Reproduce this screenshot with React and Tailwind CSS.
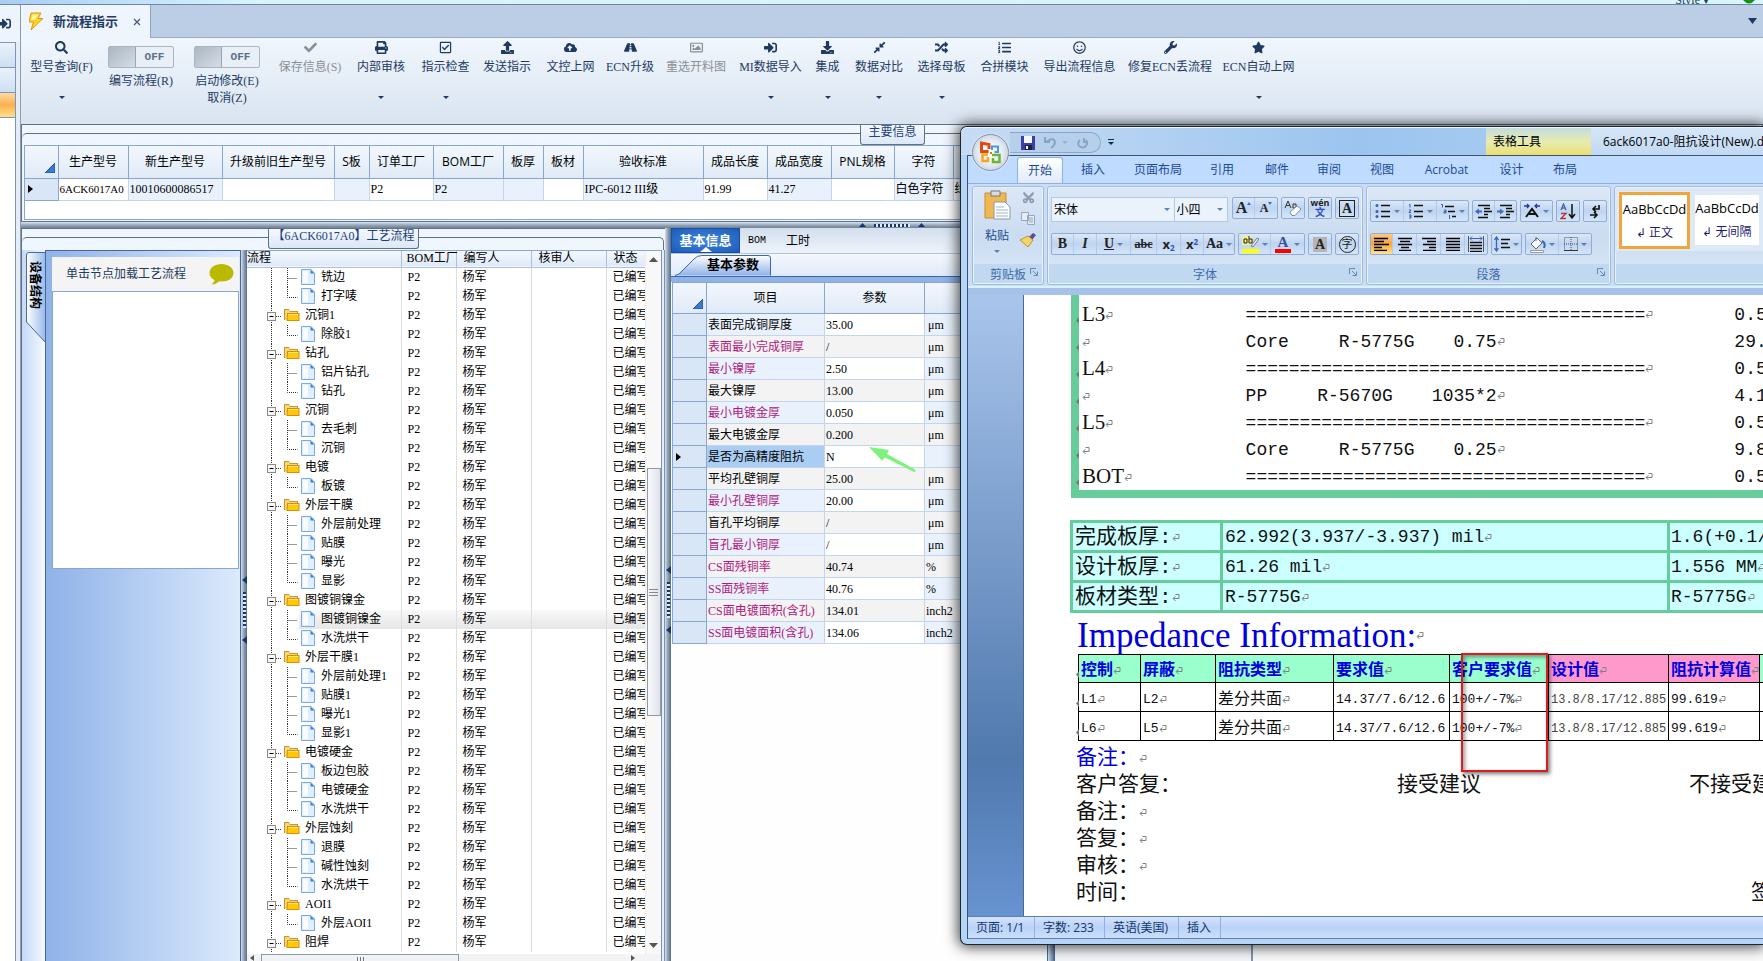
import React from 'react';
import { FaSearch, FaCheck, FaPrint, FaRegCheckSquare, FaUpload, FaCloudUploadAlt, FaRoad, FaRegImage, FaSignInAlt, FaDownload, FaCompressAlt, FaRandom, FaListOl, FaRegSmile, FaWrench, FaStar, FaCut } from 'react-icons/fa';

const toolItems = [
  { label: '保存信息(S)', icon: FaCheck, width: 'w-[72px]', disabled: true },
  { label: '内部审核', icon: FaPrint, width: 'w-[70px]', menu: true },
  { label: '指示检查', icon: FaRegCheckSquare, width: 'w-[59px]', menu: true },
  { label: '发送指示', icon: FaUpload, width: 'w-[64px]' },
  { label: '文控上网', icon: FaCloudUploadAlt, width: 'w-[63px]' },
  { label: 'ECN升级', icon: FaRoad, width: 'w-[56px]' },
  { label: '重选开料图', icon: FaRegImage, width: 'w-[76px]', disabled: true },
  { label: 'MI数据导入', icon: FaSignInAlt, width: 'w-[73px]', menu: true },
  { label: '集成', icon: FaDownload, width: 'w-[41px]', menu: true },
  { label: '数据对比', icon: FaCompressAlt, width: 'w-[62px]', menu: true },
  { label: '选择母板', icon: FaRandom, width: 'w-[63px]', menu: true },
  { label: '合拼模块', icon: FaListOl, width: 'w-[63px]' },
  { label: '导出流程信息', icon: FaRegSmile, width: 'w-[87px]' },
  { label: '修复ECN丢流程', icon: FaWrench, width: 'w-[94px]' },
  { label: 'ECN自动上网', icon: FaStar, width: 'w-[83px]', menu: true },
];

const mainColumns = [
  { name: '生产型号', width: 'w-[70px]', value: '6ACK6017A0', tint: false },
  { name: '新生产型号', width: 'w-[94px]', value: '10010600086517', tint: true },
  { name: '升级前旧生产型号', width: 'w-[112px]', value: '', tint: false },
  { name: 'S板', width: 'w-[35px]', value: '', tint: true },
  { name: '订单工厂', width: 'w-[64px]', value: 'P2', tint: false },
  { name: 'BOM工厂', width: 'w-[70px]', value: 'P2', tint: true },
  { name: '板厚', width: 'w-[40px]', value: '', tint: true },
  { name: '板材', width: 'w-[40px]', value: '', tint: false },
  { name: '验收标准', width: 'w-[120px]', value: 'IPC-6012 III级', tint: true },
  { name: '成品长度', width: 'w-[64px]', value: '91.99', tint: false },
  { name: '成品宽度', width: 'w-[64px]', value: '41.27', tint: true },
  { name: 'PNL规格', width: 'w-[63px]', value: '', tint: false },
  { name: '字符', width: 'w-[59px]', value: '白色字符', tint: true },
  { name: '', width: 'w-[80px]', value: '绿色', tint: false },
];

const processTree = [
  { name: '', steps: ['铣边', '打字唛'] },
  { name: '沉铜1', steps: ['除胶1'] },
  { name: '钻孔', steps: ['铝片钻孔', '钻孔'] },
  { name: '沉铜', steps: ['去毛刺', '沉铜'] },
  { name: '电镀', steps: ['板镀'] },
  { name: '外层干膜', steps: ['外层前处理', '贴膜', '曝光', '显影'] },
  { name: '图镀铜镍金', steps: ['图镀铜镍金', '水洗烘干'] },
  { name: '外层干膜1', steps: ['外层前处理1', '贴膜1', '曝光1', '显影1'] },
  { name: '电镀硬金', steps: ['板边包胶', '电镀硬金', '水洗烘干'] },
  { name: '外层蚀刻', steps: ['退膜', '碱性蚀刻', '水洗烘干'] },
  { name: 'AOI1', steps: ['外层AOI1'] },
  { name: '阻焊', steps: [] },
];

const treeRows = processTree.flatMap((group) => [
  ...(group.name ? [{ name: group.name, folder: true }] : []),
  ...group.steps.map((step, i) => ({
    name: step,
    last: i === group.steps.length - 1,
    selected: group.name === '图镀铜镍金' && i === 0,
  })),
]);

const params = [
  { name: '表面完成铜厚度', value: '35.00', unit: 'μm' },
  { name: '表面最小完成铜厚', value: '/', unit: 'μm', key: true },
  { name: '最小镍厚', value: '2.50', unit: 'μm', key: true },
  { name: '最大镍厚', value: '13.00', unit: 'μm' },
  { name: '最小电镀金厚', value: '0.050', unit: 'μm', key: true },
  { name: '最大电镀金厚', value: '0.200', unit: 'μm' },
  { name: '是否为高精度阻抗', value: 'N', unit: '', current: true },
  { name: '平均孔壁铜厚', value: '25.00', unit: 'μm' },
  { name: '最小孔壁铜厚', value: '20.00', unit: 'μm', key: true },
  { name: '盲孔平均铜厚', value: '/', unit: 'μm' },
  { name: '盲孔最小铜厚', value: '/', unit: 'μm', key: true },
  { name: 'CS面残铜率', value: '40.74', unit: '%', key: true },
  { name: 'SS面残铜率', value: '40.76', unit: '%', key: true },
  { name: 'CS面电镀面积(含孔)', value: '134.01', unit: 'inch2', key: true },
  { name: 'SS面电镀面积(含孔)', value: '134.06', unit: 'inch2', key: true },
];

const wordTabs = [
  { name: '插入', width: 'w-[60px]' },
  { name: '页面布局', width: 'w-[70px]' },
  { name: '引用', width: 'w-[58px]' },
  { name: '邮件', width: 'w-[52px]' },
  { name: '审阅', width: 'w-[52px]' },
  { name: '视图', width: 'w-[54px]' },
  { name: 'Acrobat', width: 'w-[75px]' },
  { name: '设计', width: 'w-[55px]' },
  { name: '布局', width: 'w-[52px]' },
];

const foil = '=====================================';

const stackRows = [
  { layer: 'L3', text: foil, value: '0.59' },
  { layer: '', text: 'Core', part: 'R-5775G', size: '0.75', value: '29.53' },
  { layer: 'L4', text: foil, value: '0.59' },
  { layer: '', text: 'PP', part: 'R-5670G', size: '1035*2', value: '4.17' },
  { layer: 'L5', text: foil, value: '0.59' },
  { layer: '', text: 'Core', part: 'R-5775G', size: '0.25', value: '9.84' },
  { layer: 'BOT', text: foil, value: '0.59' },
];

const boardRows = [
  ['完成板厚:', '62.992(3.937/-3.937) mil', '1.6(+0.1/-0.1) MM'],
  ['设计板厚:', '61.26 mil', '1.556 MM'],
  ['板材类型:', 'R-5775G', 'R-5775G'],
];

const impedanceRows = [
  ['L1', 'L2', '差分共面', '14.37/7.6/12.6', '100+/-7%', '13.8/8.17/12.885', '99.619'],
  ['L6', 'L5', '差分共面', '14.37/7.6/12.6', '100+/-7%', '13.8/8.17/12.885', '99.619'],
];

const Caret = ({ className = 'text-[#1f3a5f]' }) => (
  <svg width="6" height="3" viewBox="0 0 6 3" className={`shrink-0 ${className}`}><path d="M0 0h6L3 3z" fill="currentColor" /></svg>
);

const Mark = () => (
  <svg width="8" height="9" viewBox="0 0 8 9" className="inline-block shrink-0"><path d="M3.500 1.500h3.500v4H1.500M3.500 3.500l-2.500 2 2.500 2.500" fill="none" stroke="#808080" /></svg>
);

const CellMark = () => (
  <svg width="3" height="7" viewBox="0 0 3 7" className="absolute bottom-[4px] left-[-3px]"><path d="M3 0v7L0 3.500z" fill="#6b7f76" /></svg>
);

const FolderIcon = () => (
  <svg width="16" height="14" viewBox="0 0 16 14" className="shrink-0">
    <path d="M0 1h5l1 2h8v9H0z" fill="#c9962b" />
    <path d="M1 2h4l1 2h7v2H3v6H1z" fill="#f3d67c" />
    <path d="M3 5h12.500v8H2.500z" fill="#d98f00" />
    <path d="M4 6h10.500v6H3.500z" fill="#ffc80a" />
    <path d="M4 6h10v1H4z" fill="#ffe680" />
  </svg>
);

const PageIcon = () => (
  <svg width="14" height="16" viewBox="0 0 14 16" className="shrink-0">
    <path d="M1 .5h9l3.500 3.500v11.500H.5V.5z" fill="#e0efff" stroke="#7aaae6" />
    <path d="M2 2h5v12H2z" fill="#f8fcff" />
    <path d="M9.500 .5v4h4z" fill="#3d7fd9" />
  </svg>
);

const Splitter = ({ offset }) => (
  <div className="flex w-[6px] shrink-0 flex-col items-center gap-[8px] overflow-hidden bg-linear-to-r from-[#d6e0ea] via-[#8e9fb2] to-[#55708f]">
    <div className={offset} />
    <svg width="5" height="8" viewBox="0 0 5 8" className="shrink-0"><path d="M5 0v8L0 4z" fill="#17376b" /></svg>
    <div className="h-[36px] w-[3px] shrink-0 bg-[repeating-linear-gradient(#17376b_0_2px,#dfe8f3_2px_4px)]" />
    <svg width="5" height="8" viewBox="0 0 5 8" className="shrink-0"><path d="M5 0v8L0 4z" fill="#17376b" /></svg>
  </div>
);

const ToolButton = ({ item }) => {
  const Icon = item.icon;
  return (
    <button disabled={item.disabled} className={`flex h-full shrink-0 flex-col items-center whitespace-nowrap pt-[2px] ${item.width} ${item.disabled ? 'text-[#8b8f94]' : 'text-[#1f3a5f]'}`}>
      <Icon size={13} />
      <span className="mt-[5px] leading-[16px]">{item.label}</span>
      {item.menu && <Caret className="mt-[21px]" />}
    </button>
  );
};

const ToggleItem = ({ label, extra, width }) => (
  <label className={`flex h-full shrink-0 flex-col items-center whitespace-nowrap pt-[7px] text-[#1f3a5f] ${width}`}>
    <input type="checkbox" className="sr-only" />
    <span className="flex h-[22px] w-[66px] rounded-[2px] border border-[#a9b5c2] bg-[#e9eff6]">
      <span className="w-[27px] border-r border-[#98a5b3] bg-linear-to-br from-[#aab6c3] to-[#d6dde6]" />
      <span className="flex-1 text-center font-['Liberation_Mono'] text-[11px] font-bold leading-[20px] text-[#5d6f86]">OFF</span>
    </span>
    <span className="mt-[5px] leading-[16px]">{label}</span>
    {extra && <span className="leading-[18px]">{extra}</span>}
  </label>
);

const GridCorner = () => (
  <svg width="10" height="10" viewBox="0 0 10 10" className="ml-auto mr-[3px]"><path d="M10 0v10H0z" fill="#3b78d8" stroke="#1f4f9e" /></svg>
);

const RowPointer = () => (
  <svg width="5" height="8" viewBox="0 0 5 8" className="ml-[3px]"><path d="M0 0v8l5-4z" fill="#000" /></svg>
);

const MainInfo = () => (
  <section className="h-[98px] shrink-0 border border-[#5f7186] bg-[#f0f6fd]">
    <div className="relative mt-[8px] h-[88px] rounded-t-[5px] border-t border-[#5f7186] px-[2px] pt-[11px]">
      <h2 className="absolute left-[838px] top-[-9px] h-[20px] w-[65px] rounded-b-[3px] border border-t-0 border-[#5f7186] bg-linear-to-b from-[#f3f8fd] to-[#dce8f6] text-center leading-[14px] text-[#1f3f7a]">主要信息</h2>
      <div className="h-[75px] overflow-hidden border border-[#8ba6cc] bg-white">
        <table className="w-[1008px] table-fixed border-collapse">
          <thead>
            <tr className="h-[32px] bg-linear-to-b from-[#f2f7fd] to-[#e0eaf6]">
              <th className="w-[33px] border-b border-r border-[#8ba6cc] pt-[12px]"><GridCorner /></th>
              {mainColumns.map((c, i) => (
                <th key={i} className={`whitespace-nowrap border-b border-r border-[#8ba6cc] font-['Open_Sans','Noto_Sans_CJK_SC',sans-serif] font-normal leading-[16px] ${c.width}`}>{c.name}</th>
              ))}
            </tr>
          </thead>
          <tbody>
            <tr className="h-[22px]">
              <td className="border-b border-r border-[#8ba6cc] bg-[#d9e6f5]"><RowPointer /></td>
              {mainColumns.map((c, i) => (
                <td key={i} className={`overflow-hidden whitespace-nowrap border-b border-r border-[#c3d5ec] pl-px leading-[16px] ${c.tint ? 'bg-[#e9f2fc]' : 'bg-white'} ${i === 0 ? 'text-[11px]' : ''}`}>{c.value}</td>
              ))}
            </tr>
          </tbody>
        </table>
      </div>
    </div>
  </section>
);

const TreeCell = ({ row }) => (
  <div className="flex h-[19px] items-center">
    {row.folder ? (
      <>
        <svg width="37" height="19" viewBox="0 0 37 19" className="shrink-0">
          <path d="M24.500 0v19M29 10.500h5" fill="none" stroke="#333" strokeDasharray="1 1" />
          <rect x="20.500" y="6.500" width="8" height="8" fill="#f7f7f7" stroke="#8a8a8a" />
          <path d="M22.500 10.500h4" stroke="#000" />
        </svg>
        <FolderIcon />
        <span className="ml-[5px] leading-[16px]">{row.name}</span>
      </>
    ) : (
      <>
        <svg width="52" height="19" viewBox="0 0 52 19" className="shrink-0">
          <path d={row.last ? 'M24.500 0v19M40.500 0v10.500h10' : 'M24.500 0v19M40.500 0v19M40.500 10.500h10'} fill="none" stroke="#333" strokeDasharray="1 1" />
        </svg>
        <div className={`flex h-[19px] flex-1 items-center pl-[2px] ${row.selected ? 'bg-linear-to-b from-[#f8f8f8] to-[#e6e6e6]' : ''}`}>
          <PageIcon />
          <span className="ml-[6px] leading-[16px]">{row.name}</span>
        </div>
      </>
    )}
  </div>
);

const ProcessTree = () => (
  <div className="flex min-w-0 flex-1 flex-col border-t border-[#8ba6cc] bg-white">
    <div className="flex min-h-0 flex-1">
      <div className="min-w-0 flex-1 overflow-hidden">
        <table className="w-full table-fixed border-collapse">
          <thead>
            <tr className="h-[16px] border-b border-[#a9c0df] bg-linear-to-b from-[#f3f8fe] to-[#dfeaf8] text-left leading-[15px]">
              <th className="w-[154px] border-r border-[#a9c0df] font-normal">流程</th>
              <th className="w-[55px] whitespace-nowrap border-r border-[#a9c0df] pl-[5px] font-normal">BOM工厂</th>
              <th className="w-[75px] border-r border-[#a9c0df] pl-[7px] font-normal">编写人</th>
              <th className="w-[75px] border-r border-[#a9c0df] pl-[7px] font-normal">核审人</th>
              <th className="whitespace-nowrap pl-[7px] font-normal">状态</th>
            </tr>
          </thead>
          <tbody>
            {treeRows.map((row, i) => (
              <tr key={i} className="h-[19px] leading-[16px]">
                <td className="overflow-hidden whitespace-nowrap border-r border-[#dedede]"><TreeCell row={row} /></td>
                <td className={`border-r border-[#dedede] pl-[6px] ${row.selected ? 'bg-linear-to-b from-[#f8f8f8] to-[#e6e6e6]' : ''}`}>P2</td>
                <td className={`border-r border-[#dedede] pl-[6px] ${row.selected ? 'bg-linear-to-b from-[#f8f8f8] to-[#e6e6e6]' : ''}`}>杨军</td>
                <td className={`border-r border-[#dedede] ${row.selected ? 'bg-linear-to-b from-[#f8f8f8] to-[#e6e6e6]' : ''}`} />
                <td className={`overflow-hidden whitespace-nowrap pl-[6px] ${row.selected ? 'bg-linear-to-b from-[#f8f8f8] to-[#e6e6e6]' : ''}`}>已编写</td>
              </tr>
            ))}
          </tbody>
        </table>
      </div>
      <div className="flex w-[16px] shrink-0 flex-col items-center border-l border-[#ececec] bg-[#f8f8f8] py-[6px]">
        <svg width="9" height="5" viewBox="0 0 9 5" className="shrink-0"><path d="M0 5h9L4.500 0z" fill="#555" /></svg>
        <div className="mt-[206px] flex h-[248px] w-[14px] flex-col items-center justify-center gap-[2px] border border-[#8f98a5] bg-linear-to-r from-[#f8f9fb] to-[#dfe3ea]">
          <span className="h-px w-[9px] bg-[#888]" />
          <span className="h-px w-[9px] bg-[#888]" />
          <span className="h-px w-[9px] bg-[#888]" />
        </div>
        <svg width="9" height="5" viewBox="0 0 9 5" className="mt-auto shrink-0"><path d="M0 0h9L4.500 5z" fill="#555" /></svg>
      </div>
    </div>
    <div className="flex h-[7px] shrink-0 items-start bg-[#f3f3f3] pl-[3px]">
      <svg width="4" height="7" viewBox="0 0 4 7"><path d="M4 1v6L0 4z" fill="#555" /></svg>
      <div className="ml-[7px] flex h-[7px] w-[198px] justify-center gap-[2px] border border-b-0 border-[#8f98a5] bg-[#f0f2f5] pt-[2px]">
        <span className="w-px bg-[#777]" /><span className="w-px bg-[#777]" /><span className="w-px bg-[#777]" />
      </div>
      <svg width="4" height="7" viewBox="0 0 4 7" className="ml-auto mr-[26px]"><path d="M0 1v6l4-3z" fill="#555" /></svg>
    </div>
  </div>
);

const ProcessPanel = () => (
  <section className="relative flex w-[644px] shrink-0 flex-col border-l border-t border-[#5f7186] bg-[#f0f6fd] pt-[8px]">
    <div className="h-[13px] w-[642px] shrink-0 rounded-t-[5px] border-r border-t border-[#5f7186]" />
    <h2 className="absolute left-[246px] top-0 h-[20px] w-[151px] whitespace-nowrap rounded-b-[3px] border border-t-0 border-[#5f7186] bg-linear-to-b from-[#f3f8fd] to-[#dce8f6] text-center leading-[14px] text-[#1f3f7a]">【6ACK6017A0】工艺流程</h2>
    <div className="flex min-h-0 flex-1">
      <div className="w-[23px] shrink-0 bg-linear-to-r from-[#c4d8f6] to-[#f6faff] pt-[2px]">
        <div className="relative ml-[4px] h-[91px] w-[19px]">
          <svg width="19" height="91" viewBox="0 0 19 91" className="absolute left-0 top-0">
            <defs><linearGradient id="sideTab"><stop offset="0" stopColor="#fff" /><stop offset="1" stopColor="#9abbea" /></linearGradient></defs>
            <path d="M19 .5H3Q.5 .5 .5 3V70L19 90" fill="url(#sideTab)" stroke="#46699c" />
          </svg>
          <button className="relative pl-px pt-[9px] font-bold leading-[16px] [text-orientation:sideways] [writing-mode:vertical-rl]">设备结构</button>
        </div>
      </div>
      <div className="w-[196px] shrink-0 border border-b-0 border-[#46699c] bg-linear-to-r from-[#8fb2e8] to-[#dceafc] pl-[6px] pr-px pt-[6px]">
        <div className="flex h-[34px] items-center bg-[#f4f4f4] pl-[14px] leading-[16px] text-[#1f3a5f]">
          单击节点加载工艺流程
          <svg width="25" height="21" viewBox="0 0 25 21" className="ml-auto mr-[5px]"><path d="M12.500 0C19 0 24.500 3.800 24.500 9s-5.500 8.500-12 8.500q-1 0-2-.200Q7 20.500 2.500 20.500q3-2 3-4.500Q.5 13.500 .5 9C.5 3.800 6 0 12.500 0z" fill="#b9b900" /></svg>
        </div>
        <div className="h-[278px] border border-[#8ba6cc] bg-white" />
      </div>
      <Splitter offset="h-[318px] shrink-0" />
      <ProcessTree />
      <div className="w-[4px] shrink-0 border-x border-[#7d92ab] bg-[#e6eef7]" />
    </div>
  </section>
);

const ParamPanel = () => (
  <section className="flex w-[376px] shrink-0 flex-col bg-[#fefefe]">
    <nav className="flex h-[26px] shrink-0 items-center border-b border-[#b5c3d5] bg-linear-to-b from-[#d3dfee] to-[#edf3fa]">
      <button className="relative h-[25px] w-[69px] border border-[#1a4fa0] bg-radial from-[#3f87e0] to-[#1c5cb8] text-[13px] font-bold leading-[18px] text-white">
        基本信息
        <svg width="12" height="5" viewBox="0 0 12 5" className="absolute bottom-0 left-[28px]"><path d="M6 0l6 5H0z" fill="#fff" /></svg>
      </button>
      <button className="ml-[8px] font-['Liberation_Mono'] text-[10px] leading-[16px]">BOM</button>
      <button className="ml-[20px]">工时</button>
    </nav>
    <div className="flex h-[28px] shrink-0 items-end border-b-[5px] border-[#8fb2e8] bg-linear-to-b from-[#f5f8fd] to-[#dde9fa]">
      <div className="flex flex-1 border-b border-[#3b68a8]">
        <div className="relative ml-[4px] h-[21px] w-[97px]">
          <svg width="97" height="21" viewBox="0 0 97 21" className="absolute left-0 top-0">
            <defs><linearGradient id="topTab" x2="0" y2="1"><stop offset="0" stopColor="#fff" /><stop offset="1" stopColor="#8fb2e8" /></linearGradient></defs>
            <path d="M0 20.500Q4 20 7 16L19 4Q22 .5 27 .5H93Q95.500 .5 95.500 3V20.500" fill="url(#topTab)" stroke="#3b68a8" />
          </svg>
          <button className="relative ml-[32px] text-[13px] font-bold leading-[20px]">基本参数</button>
        </div>
      </div>
    </div>
    <table className="ml-px w-[375px] table-fixed border-collapse border-l border-t border-[#8ba6cc]">
      <thead>
        <tr className="h-[31px] bg-linear-to-b from-[#f2f7fd] to-[#dfe9f6] font-['Open_Sans','Noto_Sans_CJK_SC',sans-serif]">
          <th className="w-[34px] border-b border-r border-[#8ba6cc] pt-[12px]"><GridCorner /></th>
          <th className="w-[118px] border-b border-r border-[#8ba6cc] font-normal">项目</th>
          <th className="w-[100px] border-b border-r border-[#8ba6cc] font-normal">参数</th>
          <th className="border-b border-[#8ba6cc]" />
        </tr>
      </thead>
      <tbody>
        {params.map((p, i) => (
          <tr key={p.name} className={`h-[22px] leading-[16px] ${i % 2 ? 'bg-[#f3f3f3]' : 'bg-[#e9f2fc]'}`}>
            <td className="border-b border-r border-[#8ba6cc] bg-[#d9e6f5]">{p.current && <RowPointer />}</td>
            <td className={`whitespace-nowrap border-b border-r border-[#c3d5ec] pl-px ${p.key ? 'text-[#b0187c]' : ''} ${p.current ? 'bg-[#aacdf3]' : ''}`}>{p.name}</td>
            <td className={`relative border-b border-r border-[#c3d5ec] pl-px ${i % 2 ? '' : 'bg-white'}`}>
              {p.value}
              {p.current && (
                <svg width="48" height="28" viewBox="0 0 48 28" className="absolute left-[44px] top-0"><path d="M0 1l20 3-2 4 28 15.500q1.500 2-1 2.500L16 11.500l-3 3z" fill="#7df27d" /></svg>
              )}
            </td>
            <td className={`border-b border-[#c3d5ec] ${p.unit === 'μm' ? 'pl-[3px]' : 'pl-px'}`}>{p.unit}</td>
          </tr>
        ))}
      </tbody>
    </table>
  </section>
);

const RibbonGroup = ({ title, width, launcher, children }) => (
  <section className={`flex h-[99px] shrink-0 flex-col rounded-[3px] border border-[#9fbbdf] bg-linear-to-b from-[#dbe7f6] via-[#cbdcf1] to-[#dae8f8] shadow-[inset_0_0_0_1px_#e9f2fc] ${width}`}>
    <div className="flex-1">{children}</div>
    <div className="relative mx-px mb-px h-[19px] bg-[#c1d8f1] text-center leading-[21px] text-[#3e6aaa]">
      {title}
      {launcher && (
        <svg width="8" height="8" viewBox="0 0 8 8" className="absolute right-[4px] top-[4px]"><path d="M.5 6V.5H6M3 3l4 4M7.500 3.500v4h-4" fill="none" stroke="#6687b3" /></svg>
      )}
    </div>
  </section>
);

const Bar = ({ children }) => (
  <div className="flex h-[22px] shrink-0 divide-x divide-[#b3c9e6] rounded-[2px] border border-[#8fadd6] bg-linear-to-b from-[#dbe8f8] via-[#bed4f0] to-[#d5e5f8]">{children}</div>
);

const RB = ({ width, label, caret, className = '', children }) => (
  <button aria-label={label} className={`flex shrink-0 items-center justify-center gap-[3px] ${width} ${className}`}>
    {children}
    {caret && <Caret className="text-[#5a82b8]" />}
  </button>
);

const Lines = ({ rows }) => (
  <svg width="16" height="14" viewBox="0 0 16 14"><path d={rows} stroke="#000" strokeWidth="1.500" fill="none" /></svg>
);

const ListIcon = ({ kind }) => (
  <svg width="16" height="16" viewBox="0 0 16 16">
    <path d={kind === 'multi' ? 'M5 3.500h9M8 8.500h7M12 13.500h4' : 'M6 2.500h9M6 8.500h9M6 13.500h9'} stroke="#111" strokeWidth="1.300" />
    {kind === 'bullet' && <g fill="#3b5fb0"><circle cx="2" cy="2.500" r="1.500" /><circle cx="2" cy="8.500" r="1.500" /><circle cx="2" cy="13.500" r="1.500" /></g>}
    {kind === 'number' && <path d="M1 1.500h1v3M1 7h2L1 9.500h2M1 12h2v1.500H1.500M3 13.500V15H1" fill="none" stroke="#3b5fb0" />}
    {kind === 'multi' && <path d="M1 1.500h1.500v3M4 7h2v3H4V8.500h2M9.500 12v4" fill="none" stroke="#3b5fb0" />}
  </svg>
);

const Indent = ({ out }) => (
  <svg width="17" height="15" viewBox="0 0 17 15">
    <path d="M3 1.500h12M9 4.500h6M9 7.500h8M9 10.500h4M3 13.500h10" stroke="#111" strokeWidth="1.700" />
    <path d={out ? 'M0 7.500l4-3v2h3v2H4v2z' : 'M7 7.500l-4-3v2H0v2h3v2z'} fill="#3d6cc4" />
  </svg>
);

const OfficeButton = () => (
  <button aria-label="Office" className="absolute left-[11px] top-[7px] flex h-[37px] w-[37px] items-center justify-center rounded-full border border-[#8193ad] bg-radial from-white via-[#e6ebf2] to-[#aebccf] shadow-[0_0_2px_#fff]">
    <svg width="23" height="23" viewBox="0 0 23 23" fill="none">
      <path d="M10 8V3.500L2.500 2v8.500h7" stroke="#dd4a12" strokeWidth="3" />
      <path d="M13 9V5.500h6V11h-3.500" stroke="#4c9bd8" strokeWidth="2" />
      <path d="M9 13.500H3.500V20H9v-4" stroke="#f2a81d" strokeWidth="2.500" />
      <path d="M13 14h7.500v7H14v-4" stroke="#6fb338" strokeWidth="2.500" />
      <path d="M11 11h2v2h-2z" fill="#e0701d" />
    </svg>
  </button>
);

const FontGroup = () => (
  <div className="flex flex-col px-[3px] pt-[10px]">
    <div className="flex">
      <div className="relative h-[25px] w-[125px] border border-[#b1c8e6] bg-[#eaf2fb]">
        <select aria-label="字体" className="h-full w-full appearance-none pl-[2px] text-[12px] outline-none"><option>宋体</option></select>
        <Caret className="pointer-events-none absolute right-[4px] top-[10px] text-[#5a82b8]" />
      </div>
      <div className="relative h-[25px] w-[54px] border border-l-0 border-[#b1c8e6] bg-[#eaf2fb]">
        <select aria-label="字号" className="h-full w-full appearance-none pl-[2px] text-[12px] outline-none"><option>小四</option></select>
        <Caret className="pointer-events-none absolute right-[4px] top-[10px] text-[#5a82b8]" />
      </div>
      <div className="ml-[4px] flex gap-[3px] font-['Liberation_Serif','Noto_Sans_CJK_SC',serif] font-bold text-[#222]">
        <Bar>
          <RB width="w-[22px]" label="增大字体"><span className="text-[16px]">A</span><svg width="4" height="3" className="mb-[10px] -ml-[3px]"><path d="M0 3h4L2 0z" fill="#3d6cc4" /></svg></RB>
          <RB width="w-[22px]" label="缩小字体"><span className="text-[12px]">A</span><svg width="4" height="3" className="mb-[10px] -ml-[3px]"><path d="M0 0h4L2 3z" fill="#3d6cc4" /></svg></RB>
        </Bar>
        <Bar>
          <RB width="w-[22px]" label="清除格式">
            <svg width="18" height="17" viewBox="0 0 18 17"><path d="M1 8l3-7 3 7M2 5.500h4M9 8V4h3v4H9" fill="none" stroke="#333" /><path d="M6 12l7-6 4 3-6 6.500H8z" fill="#fff" stroke="#7d8ea6" /></svg>
          </RB>
        </Bar>
        <Bar>
          <button className="flex w-[22px] flex-col items-center">
            <span className="font-['Open_Sans'] text-[9px] leading-[9px]">wén</span>
            <span className="text-[10px] leading-[11px] text-[#2e4fc0]">文</span>
          </button>
        </Bar>
        <Bar><RB width="w-[22px]" label="字符边框"><span className="border border-[#222] px-[2px] text-[14px] leading-[15px]">A</span></RB></Bar>
      </div>
    </div>
    <div className="mt-[11px] flex gap-[3px] font-['Liberation_Serif','Noto_Sans_CJK_SC',serif] text-[#222]">
      <Bar>
        <RB width="w-[22px]" className="text-[14px] font-bold">B</RB>
        <RB width="w-[23px]" className="text-[14px] font-bold italic">I</RB>
        <RB width="w-[34px]" className="text-[14px] font-bold underline" caret>U</RB>
        <RB width="w-[26px]" className="text-[12px] font-bold line-through">abc</RB>
        <RB width="w-[24px]"><span className="font-['Open_Sans'] text-[13px] font-bold">x<sub className="text-[8px] text-[#2e4fc0]">2</sub></span></RB>
        <RB width="w-[23px]"><span className="font-['Open_Sans'] text-[13px] font-bold">x<sup className="text-[8px] text-[#2e4fc0]">2</sup></span></RB>
        <RB width="w-[30px]" className="text-[14px] font-bold" caret>Aa</RB>
      </Bar>
      <Bar>
        <RB width="w-[32px]" label="突出显示" caret>
          <svg width="17" height="18" viewBox="0 0 17 18"><path d="M0 14h17v4H0z" fill="#ffff00" /><path d="M0 1h10v9H0z" fill="#f6f08a" /><path d="M2 8V4h3v4H2M7 1v7h3V4H7" fill="none" stroke="#222" /><path d="M9 11l6-8 2 1-6 8z" fill="#e6ecf5" stroke="#666" strokeWidth=".8" /></svg>
        </RB>
        <RB width="w-[33px]" caret><span className="w-[16px] border-b-4 border-[#f00] text-center text-[15px] font-bold leading-[14px] text-[#2e529c]">A</span></RB>
      </Bar>
      <Bar><RB width="w-[22px]"><span className="bg-[#b5b5b5] px-[2px] text-[14px] font-bold leading-[15px]">A</span></RB></Bar>
      <Bar><RB width="w-[22px]"><span className="h-[17px] w-[17px] rounded-full border border-[#222] text-[11px] leading-[15px]">字</span></RB></Bar>
    </div>
  </div>
);

const ParagraphGroup = () => (
  <div className="flex flex-col px-[3px] pt-[13px]">
    <div className="flex gap-[3px]">
      <Bar>
        <RB width="w-[33px]" label="项目符号" caret><ListIcon kind="bullet" /></RB>
        <RB width="w-[33px]" label="编号" caret><ListIcon kind="number" /></RB>
        <RB width="w-[31px]" label="多级列表" caret><ListIcon kind="multi" /></RB>
      </Bar>
      <Bar>
        <RB width="w-[22px]" label="减少缩进量"><Indent out /></RB>
        <RB width="w-[21px]" label="增加缩进量"><Indent /></RB>
      </Bar>
      <Bar>
        <RB width="w-[31px]" label="中文版式" caret><svg width="16" height="16" viewBox="0 0 16 16" fill="none"><path d="M2 14L8 6l6 8M5 11h6" stroke="#111" strokeWidth="2" /><path d="M0 3h5M3 1l2 2-2 2M16 3h-5M13 1l-2 2 2 2" stroke="#2437a8" strokeWidth="1.300" /></svg></RB>
      </Bar>
      <Bar>
        <RB width="w-[22px]" label="排序"><svg width="16" height="17" viewBox="0 0 16 17" fill="none"><path d="M1 7l2.500-6L6 7M2 5h3" stroke="#3b66b8" strokeWidth="1.300" /><path d="M1 10.500h5L1 15.500h5" stroke="#b43838" strokeWidth="1.300" /><path d="M12 1v13M9 11l3 4 3-4" stroke="#111" strokeWidth="1.500" /></svg></RB>
      </Bar>
      <Bar>
        <RB width="w-[22px]" label="编辑标记"><svg width="12" height="15" viewBox="0 0 12 15" fill="none"><path d="M10 1v4H5M7 2L4 5l3 3M1 11h6M5 8l3 3-3 3" stroke="#111" strokeWidth="1.600" /></svg></RB>
      </Bar>
    </div>
    <div className="mt-[11px] flex gap-[3px]">
      <Bar>
        <RB width="w-[22px]" label="左对齐" className="bg-linear-to-b from-[#fbc98a] via-[#f8a53c] to-[#fde58a]"><Lines rows="M0 1.500h14M0 4.500h10M0 7.500h15M0 10.500h8M0 13.500h13" /></RB>
        <RB width="w-[24px]" label="居中"><Lines rows="M1 1.500h14M3 4.500h10M1 7.500h14M4 10.500h8M2 13.500h12" /></RB>
        <RB width="w-[24px]" label="右对齐"><Lines rows="M1 1.500h14M6 4.500h9M2 7.500h13M8 10.500h7M2 13.500h13" /></RB>
        <RB width="w-[24px]" label="两端对齐"><Lines rows="M1 1.500h14M1 4.500h14M1 7.500h14M1 10.500h14M1 13.500h14" /></RB>
        <RB width="w-[22px]" label="分散对齐"><svg width="16" height="16" viewBox="0 0 16 16" fill="none"><path d="M.5 0v16M15.500 0v16" stroke="#555" /><path d="M2 2.500h12M4 .5l-2 2 2 2M12 .5l2 2-2 2" stroke="#3b66b8" /><path d="M2 6.500h12M2 9.500h12M2 12.500h12M2 15.500h12" stroke="#111" strokeWidth="1.400" /></svg></RB>
      </Bar>
      <Bar>
        <RB width="w-[29px]" label="行距" caret><svg width="16" height="16" viewBox="0 0 16 16" fill="none"><path d="M2.500 1v14M.5 4l2-3 2 3M.5 12l2 3 2-3" stroke="#3b66b8" strokeWidth="1.300" /><path d="M7 3.500h9M7 7.500h7M7 11.500h9" stroke="#111" strokeWidth="1.500" /></svg></RB>
      </Bar>
      <Bar>
        <RB width="w-[33px]" label="底纹" caret><svg width="17" height="17" viewBox="0 0 17 17"><path d="M2 8l6-6 5 5-6 6z" fill="#f4f7fb" stroke="#666" /><path d="M13 5q4 2 2 7" fill="none" stroke="#3b66b8" strokeWidth="2" /><path d="M1.500 14.500h13v2h-13z" fill="#fff" stroke="#999" /><path d="M7 5V1" stroke="#666" /></svg></RB>
        <RB width="w-[32px]" label="边框" caret><svg width="14" height="14" viewBox="0 0 14 14" fill="none"><path d="M.5 .5h13v13H.5zM7 0v14M0 7h14" stroke="#555" strokeDasharray="1 1" /><path d="M0 13.500h14" stroke="#333" /></svg></RB>
      </Bar>
    </div>
  </div>
);

const WordDocument = () => (
  <main className="relative min-w-0 flex-1 overflow-hidden border-l border-[#4a6a95] bg-white font-['Liberation_Mono','Noto_Sans_CJK_SC',monospace] text-[18px] text-[#111]">
    <div className="ml-[47px] w-[820px] border-b-8 border-l-8 border-[#66cc99] pt-[6px]">
      <table className="table-fixed border-collapse">
        <tbody>
          {stackRows.map((r, i) => (
            <tr key={i} className="h-[27px] whitespace-nowrap leading-[24px]">
              <td className="relative w-[167px] pl-[3px]"><CellMark /><span className="font-['Liberation_Serif'] text-[21px]">{r.layer}</span><Mark /></td>
              <td className="w-[489px]">
                <span className="flex items-center">
                  <span>{r.text}</span>
                  {r.part && <span className="ml-[50px]">{r.part}</span>}
                  {r.size && <span className="ml-[39px]">{r.size}</span>}
                  <Mark />
                </span>
              </td>
              <td className="w-[157px]">{r.value}</td>
            </tr>
          ))}
        </tbody>
      </table>
    </div>

    <table className="ml-[46px] mt-[22px] w-[820px] table-fixed border-collapse border-[3px] border-[#66cc99] bg-[#ccffff]">
      <tbody>
        {boardRows.map((r) => (
          <tr key={r[0]} className="h-[30px] whitespace-nowrap border-b-[3px] border-[#66cc99] leading-[25px]">
            <th className="w-[150px] border-r-[3px] border-[#66cc99] pl-[2px] pt-[2px] text-left text-[21px] font-normal">{r[0]}<Mark /></th>
            <td className="w-[447px] border-r-[3px] border-[#66cc99] pl-[2px] pt-[2px]">{r[1]}<Mark /></td>
            <td className="pl-px pt-[2px]">{r[2]}<Mark /></td>
          </tr>
        ))}
      </tbody>
    </table>

    <h1 className="ml-[53px] flex h-[41px] items-center whitespace-nowrap pt-[4px] font-['Liberation_Serif',serif] text-[35px] leading-[36px] text-[#0000dd]">Impedance Information:<Mark /></h1>

    <div className="relative ml-[54px]">
      <table className="w-[800px] table-fixed border-collapse border border-black text-[16px]">
        <thead>
          <tr className="h-[28px] whitespace-nowrap bg-[#99ffcc] text-left leading-[20px] text-[#0000dd]">
            <th className="relative w-[62px] border border-black pl-[2px] pt-[4px]"><CellMark />控制<Mark /></th>
            <th className="w-[75px] border border-black pl-[2px] pt-[4px]">屏蔽<Mark /></th>
            <th className="w-[118px] border border-black pl-[2px] pt-[4px]">阻抗类型<Mark /></th>
            <th className="w-[116px] border border-black pl-[2px] pt-[4px]">要求值<Mark /></th>
            <th className="w-[99px] border border-black pl-[2px] pt-[4px]">客户要求值<Mark /></th>
            <th className="w-[120px] border border-black bg-[#ff99cc] pl-[2px] pt-[4px]">设计值<Mark /></th>
            <th className="w-[91px] overflow-hidden border border-black bg-[#ff99cc] pl-[2px] pt-[4px]">阻抗计算值<Mark /></th>
            <th className="border border-black" />
          </tr>
        </thead>
        <tbody>
          {impedanceRows.map((r) => (
            <tr key={r[0]} className="h-[29px] whitespace-nowrap leading-[20px]">
              {r.map((v, i) => (
                <td key={i} className={`relative border border-black pl-[2px] pt-[5px] ${i === 2 ? 'text-[16px]' : i === 5 ? 'text-[12px] text-[#444]' : 'text-[13px]'}`}>{i === 0 && <CellMark />}{v}{i !== 3 && i !== 5 && <Mark />}</td>
              ))}
              <td className="border border-black" />
            </tr>
          ))}
        </tbody>
      </table>
      <div className="absolute left-[383px] top-[-1px] h-[119px] w-[87px] border-2 border-[#d81e1e] shadow-[2px_2px_4px_#0008,inset_2px_2px_4px_#0006]" />
    </div>

    <div className="ml-[52px] mt-[4px] whitespace-nowrap text-[21px] leading-[27px]">
      <p className="text-[#0000dd]">备注：<Mark /></p>
      <p className="flex">
        <span className="w-[321px] shrink-0">客户答复：</span>
        <span className="w-[292px] shrink-0">接受建议</span>
        <span>不接受建议</span>
      </p>
      <p>备注：<Mark /></p>
      <p>答复：<Mark /></p>
      <p>审核：<Mark /></p>
      <p className="flex">
        <span className="w-[675px] shrink-0">时间：</span>
        <span>签名</span>
      </p>
    </div>
  </main>
);

const WordWindow = () => (
  <div className="absolute bottom-[16px] left-[960px] right-0 top-[126px] flex flex-col rounded-l-[7px] border border-r-0 border-[#1c2633] bg-[#b4d5f8] pb-[5px] pl-[6px] font-['Open_Sans','Noto_Sans_CJK_SC',sans-serif] shadow-[0_0_14px_2px_#000b]">
    <header className="-ml-[6px] flex h-[28px] shrink-0 overflow-hidden rounded-tl-[6px] border-t border-[#e9f4ff] bg-linear-to-r from-[#c6dcf4] via-[#9cc4ef] to-[#b8d7f5]">
      <div className="ml-[49px] mt-[4px] flex h-[21px] w-[91px] items-center rounded-r-full border border-l-0 border-[#8ba6c9] bg-[#b6cfeb] pl-[11px]">
        <button aria-label="保存"><svg width="14" height="14" viewBox="0 0 14 14"><path d="M0 0h14v14H0z" fill="#3d3f9e" /><path d="M3 0h8v7H3z" fill="#f4f6ff" /><path d="M4 9h7v5H4z" fill="#1c1d4f" /><path d="M5 10h2v3H5z" fill="#fff" /></svg></button>
        <button aria-label="撤消" className="ml-[9px] flex items-center gap-[5px]"><svg width="13" height="13" viewBox="0 0 13 13" fill="none"><path d="M3 5q7-4 8 1 0 3-4 6M1 1v5h5" stroke="#8ba3c6" strokeWidth="2" /></svg><Caret className="text-[#9bb2d1]" /></button>
        <button aria-label="恢复" className="ml-[9px]"><svg width="12" height="12" viewBox="0 0 12 12" fill="none"><path d="M3 3q-3 3-1 6 4 3 7 0 2-3 0-6M7 1v4h4" stroke="#8ba3c6" strokeWidth="2" /></svg></button>
      </div>
      <button aria-label="自定义" className="ml-[7px] flex flex-col items-center justify-center gap-[2px]"><span className="h-px w-[6px] bg-[#16294a]" /><Caret className="text-[#16294a]" /></button>
      <div className="ml-auto w-[105px] shrink-0 bg-linear-to-b from-[#c4dcdc] via-[#e6ebb0] to-[#ecdf72] pl-[7px] leading-[28px]">表格工具</div>
      <h1 className="w-[172px] shrink-0 overflow-hidden whitespace-nowrap bg-linear-to-b from-[#d5e6f8] to-[#c1d9f3] pl-[12px] leading-[28px]">6ack6017a0-阻抗设计(New).docx</h1>
    </header>
    <OfficeButton />
    <div className="flex min-h-0 flex-1 flex-col border-l border-t border-[#3f536e] bg-[#bfdbff]">
      <nav className="flex h-[27px] shrink-0 items-end text-[#1d4a94]">
        <button className="ml-[49px] h-[26px] w-[46px] rounded-t-[3px] border border-b-0 border-[#8fb1e0] bg-linear-to-b from-white to-[#dfeafa]">开始</button>
        {wordTabs.map((t) => <button key={t.name} className={`h-[26px] shrink-0 ${t.width}`}>{t.name}</button>)}
      </nav>
      <div className="flex h-[105px] shrink-0 gap-[3px] overflow-hidden border-b-2 border-t border-b-[#d6f3ff] border-t-[#8fb1e0] bg-[#c9ddf6] pl-[4px] pt-[2px]">
        <RibbonGroup title="剪贴板" width="w-[72px]" launcher>
          <div className="flex">
            <button className="ml-[8px] flex w-[32px] flex-col items-center pt-[3px] text-[#1d4a94]">
              <svg width="27" height="30" viewBox="0 0 27 30"><path d="M1 3h21v25H1z" fill="#efb856" stroke="#c98e2c" /><path d="M7 1h9v5H7z" fill="#d9dde2" stroke="#777" /><path d="M10 12h11l5 5v12H10z" fill="#fff" stroke="#8a96a8" /><path d="M12 17h8M12 20h12M12 23h12M12 26h12" stroke="#9fb2cc" /></svg>
              <span className="mt-[8px] leading-[16px]">粘贴</span>
              <Caret className="mt-[6px] text-[#5a82b8]" />
            </button>
            <div className="flex flex-col items-center gap-[8px] pl-[7px] pt-[4px]">
              <button aria-label="剪切"><FaCut size={13} className="rotate-270 text-[#8c9cb4]" /></button>
              <button aria-label="复制"><svg width="15" height="13" viewBox="0 0 15 13"><path d="M.5 .5h7v8h-7zM6.500 3.500h7v9h-7z" fill="#e8edf4" stroke="#95a6c0" /><path d="M8 6h4M8 8h4M8 10h4" stroke="#95a6c0" /></svg></button>
              <button aria-label="格式刷"><svg width="16" height="14" viewBox="0 0 16 14"><path d="M9 4l4-4 3 2-4 5z" fill="#5a4a9c" /><path d="M0 7l8-4 5 4-5 7z" fill="#f2d56a" stroke="#b8923a" /></svg></button>
            </div>
          </div>
        </RibbonGroup>
        <RibbonGroup title="字体" width="w-[316px]" launcher><FontGroup /></RibbonGroup>
        <RibbonGroup title="段落" width="w-[245px]" launcher><ParagraphGroup /></RibbonGroup>
        <RibbonGroup title="" width="w-[400px]">
          <div className="mt-[4px] flex h-[60px] gap-[5px] bg-[#dde9f7] pl-[4px] text-[#1b1b6e]">
            <button className="mt-px h-[57px] w-[71px] border-[3px] border-[#f0a63a] bg-white"><span className="block text-[13px] leading-[24px] text-black">AaBbCcDd</span><span className="block leading-[24px]">↲ 正文</span></button>
            <button className="mt-[4px] h-[50px] w-[64px] bg-white"><span className="block text-[13px] leading-[24px] text-black">AaBbCcDd</span><span className="block leading-[24px]">↲ 无间隔</span></button>
          </div>
        </RibbonGroup>
      </div>
      <div className="h-[7px] shrink-0 bg-[#a6c2e8]" />
      <div className="flex min-h-0 flex-1 bg-linear-to-b from-[#a9c5ec] via-[#5079ae] via-75% to-[#6793d0] pl-[55px]">
        <WordDocument />
      </div>
      <footer className="flex h-[23px] shrink-0 divide-x divide-[#8fb1e0] border-y border-[#5f7da8] bg-linear-to-b from-[#d3e4fb] via-[#b9d2f6] to-[#cbdffa] leading-[21px] text-[#15356e]">
        <span className="w-[67px] pl-[8px]">页面: 1/1</span>
        <span className="w-[70px] pl-[8px]">字数: 233</span>
        <span className="w-[74px] pl-[8px]">英语(美国)</span>
        <span className="w-[42px] pl-[8px]">插入</span>
        <span />
      </footer>
    </div>
  </div>
);

const App = () => {
  return (
    <div className="relative flex h-screen flex-col overflow-hidden bg-[#dfeaf6] font-['Liberation_Serif','Noto_Sans_CJK_SC',serif] text-[12px] leading-[16px] text-black">
      <div className="flex h-[5px] shrink-0 justify-end overflow-hidden border-b border-[#6f87a3] bg-linear-to-r from-[#a9cdf5] via-[#d8f6fb] via-15% to-[#d8f6fb] pr-[8px]">
        <span className="-mt-[7px] leading-[14px] text-[#1f3a5f]">Style ▾</span>
        <svg width="12" height="4" viewBox="0 0 12 4" className="ml-[34px]"><path d="M0 0h12Q6 7 0 0z" fill="#159015" /></svg>
      </div>

      <div className="flex min-h-0 flex-1">
        <aside className="flex w-[21px] shrink-0 flex-col border-r border-[#8b9db3] bg-[#e4ecf5]">
          <div className="flex h-[37px] items-center bg-[#edf4fb] text-[#1f3a5f]"><FaSignInAlt size={13} className="-ml-[2px]" /></div>
          <div className="flex w-[16px] flex-1 flex-col border-r border-[#7f95b3] bg-white">
            <div className="h-[26px] border-y border-[#7f95b3] bg-linear-to-b from-[#eaf2fb] to-[#cddff3]" />
            <div className="h-[25px] border-b border-[#7f95b3] bg-linear-to-b from-[#eaf2fb] to-[#cddff3]" />
            <div className="h-[25px] border-b border-[#7f95b3] bg-linear-to-b from-[#fdd9a0] via-[#fbb04e] to-[#fde08a]" />
          </div>
        </aside>

        <div className="flex min-w-0 flex-1 flex-col">
          <div className="flex h-[33px] shrink-0 border-b border-[#98adc9] bg-[#bccde6]">
            <div className="flex h-[33px] w-[130px] items-center border-r border-[#8ea5c4] bg-[#eff5fc] pl-[8px] text-[#1f3a5f]">
              <svg width="14" height="19" viewBox="0 0 14 19"><path d="M2 1h10L9 6.500h5L2 18l2.500-8H0z" fill="#ffd21f" stroke="#d99a17" /><path d="M3.500 2.500h6L6 8H2z" fill="#fff1a0" /></svg>
              <span className="ml-[10px] text-[13px] font-bold leading-[20px]">新流程指示</span>
              <button aria-label="关闭" className="ml-[15px]"><svg width="8" height="8" viewBox="0 0 8 8"><path d="M1 1l6 6M7 1L1 7" stroke="#44597a" strokeWidth="1.200" /></svg></button>
            </div>
            <button aria-label="更多" className="ml-auto mr-[6px]"><svg width="9" height="6" viewBox="0 0 9 6"><path d="M0 0h9L4.500 6z" fill="#1f3a5f" /></svg></button>
          </div>

          <div className="flex h-[86px] shrink-0 items-start overflow-hidden bg-linear-to-b from-[#f0f6fd] to-[#d9e4f1] pt-px">
            <ToolButton item={{ label: '型号查询(F)', icon: FaSearch, width: 'w-[81px]', menu: true }} />
            <ToggleItem label="编写流程(R)" width="w-[78px]" />
            <ToggleItem label="启动修改(E)" extra="取消(Z)" width="w-[94px]" />
            {toolItems.map((item) => <ToolButton key={item.label} item={item} />)}
          </div>

          <MainInfo />

          <div className="flex h-[6px] shrink-0 items-center bg-linear-to-b from-[#dfe8f2] via-[#9aa9ba] to-[#6d8096] pl-[838px]">
            <svg width="7" height="4" viewBox="0 0 7 4"><path d="M0 4h7L3.500 0z" fill="#17376b" /></svg>
            <div className="mx-[8px] h-[3px] w-[36px] bg-[repeating-linear-gradient(90deg,#17376b_0_2px,#dfe8f3_2px_4px)]" />
            <svg width="7" height="4" viewBox="0 0 7 4"><path d="M0 4h7L3.500 0z" fill="#17376b" /></svg>
          </div>

          <div className="flex min-h-0 flex-1">
            <ProcessPanel />
            <Splitter offset="h-[330px] shrink-0" />
            <ParamPanel />
            <div className="w-[8px] shrink-0 border-x border-[#46699c] bg-linear-to-r from-[#d6e0ea] to-[#55708f]" />
            <div className="w-[198px] shrink-0 border-r-2 border-[#7f95b3] bg-[#f3f5f8]" />
            <div className="flex-1 bg-[#fafafa]" />
          </div>
        </div>
      </div>

      <WordWindow />
    </div>
  );
};

export default App;
